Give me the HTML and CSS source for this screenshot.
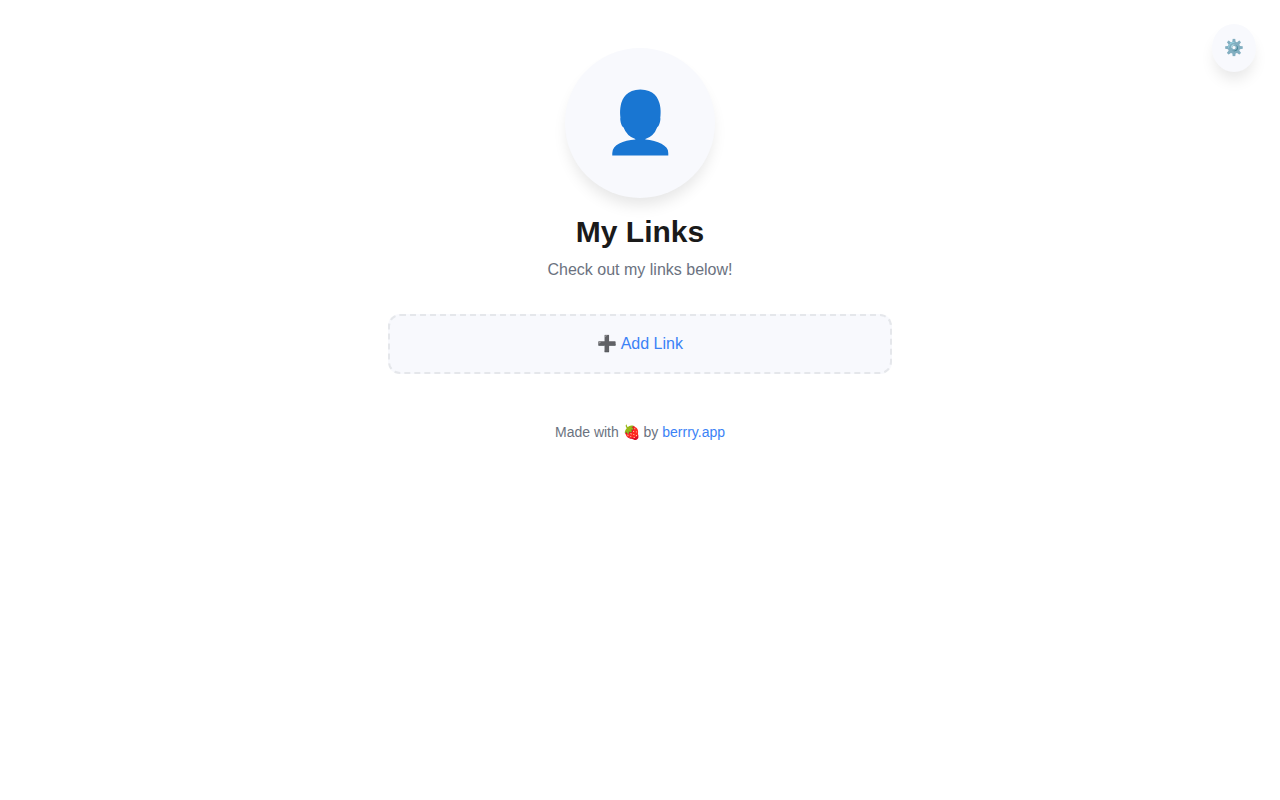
FILE: index.html
```html
<!DOCTYPE html>
<html lang="en">
  <head>
    <meta charset="UTF-8" />
    <meta name="viewport" content="width=device-width, initial-scale=1.0" />
    <title>My Links</title>
    <link rel="stylesheet" href="styles.css">
  </head>
  <body>
    <button class="settings-btn" type="button" aria-label="Settings">⚙️</button>
    <main class="container">
      <header class="profile">
        <div class="avatar">👤</div>
        <h1 class="title">My Links</h1>
        <p class="bio">Check out my links below!</p>
      </header>
      <button class="add-link" type="button">➕ Add Link</button>
      <footer class="footer">
        Made with 🍓 by <a href="https://berrry.app">berrry.app</a>
      </footer>
    </main>
  </body>
</html>
```

FILE: styles.css
```css
* {
  margin: 0;
  padding: 0;
  box-sizing: border-box;
}

body {
  min-height: 100vh;
  background: #fff;
  color: #1a1a1a;
  font-family: "Liberation Sans", Arial, sans-serif;
  line-height: 24px;
}

.container {
  max-width: 600px;
  margin: 0 auto;
  padding: 48px;
}

.profile {
  margin-bottom: 32px;
  text-align: center;
}

.avatar {
  display: flex;
  align-items: center;
  justify-content: center;
  width: 150px;
  height: 150px;
  margin: 0 auto 16px;
  border-radius: 50%;
  background: #f8f9fd;
  box-shadow: 0 10px 15px -3px rgba(0, 0, 0, 0.1);
  font-size: 60px;
}

.title {
  margin-bottom: 8px;
  font-size: 30px;
  line-height: 36px;
}

.bio {
  color: #6b7280;
  font-size: 16px;
}

.add-link {
  display: block;
  width: 100%;
  padding: 16px;
  border: 2px dashed #e5e7eb;
  border-radius: 12px;
  background: #f8f9fd;
  color: #3b82f6;
  font-family: inherit;
  font-size: 16px;
  line-height: 24px;
  cursor: pointer;
}

.footer {
  margin-top: 48px;
  color: #6b7280;
  font-size: 14px;
  line-height: 21px;
  text-align: center;
}

.footer a {
  color: #3b82f6;
  text-decoration: none;
}

.settings-btn {
  position: fixed;
  top: 24px;
  right: 24px;
  padding: 12px;
  border: none;
  border-radius: 50%;
  background: #f8f9fd;
  box-shadow: 0 10px 15px -3px rgba(0, 0, 0, 0.1);
  font-family: inherit;
  font-size: 16px;
  line-height: 24px;
  cursor: pointer;
}
```
